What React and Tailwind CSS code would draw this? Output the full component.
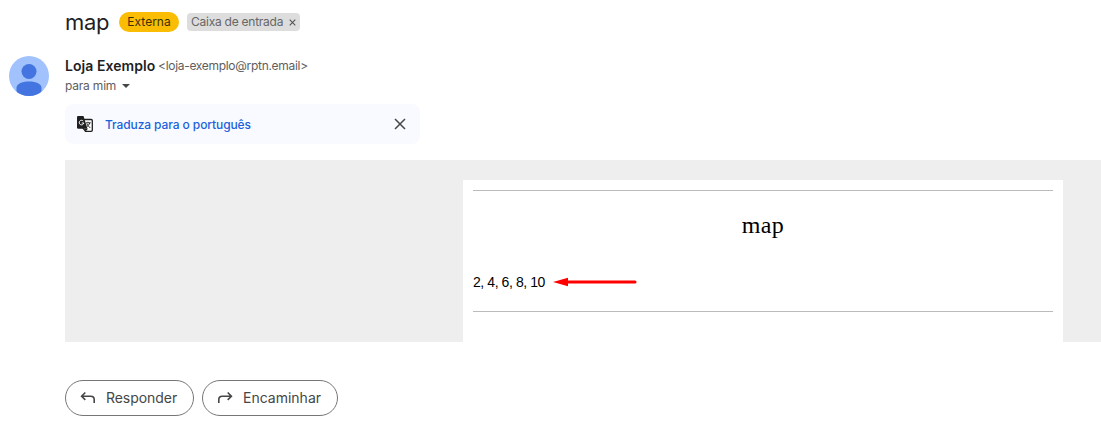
import React from "react";

function Avatar() {
  return (
    <svg className="h-10 w-10 shrink-0" viewBox="0 0 40 40">
      <defs>
        <clipPath id="avatar-circle">
          <circle cx="20" cy="20" r="20" />
        </clipPath>
      </defs>
      <g clipPath="url(#avatar-circle)">
        <rect width="40" height="40" fill="#a1c2fd" />
        <circle cx="20" cy="15.5" r="7.5" fill="#4374e0" />
        <path d="M7.5 40v-8c0-4 5-6.5 12.5-6.5S32.5 28 32.5 32v8z" fill="#4374e0" />
      </g>
    </svg>
  );
}

function ReplyIcon({ className }) {
  return (
    <svg className={className} viewBox="0 0 20 20" fill="none" stroke="#444746" strokeWidth="1.6">
      <path d="M7.3 4.5 3.6 8.2l3.7 3.7M3.6 8.2h9.2q3.4 0 3.4 3.4V15" />
    </svg>
  );
}

function TranslateIcon() {
  return (
    <svg className="h-4 w-4" viewBox="0 0 16 16" fill="none">
      <path d="M6 3.5h8.2q1.1 0 1.1 1.1v9.6q0 1.1-1.1 1.1H8.5L6 12z" fill="#fff" stroke="#1f1f1f" strokeWidth="1.3" />
      <path d="M1 0h5.5l4 12.8H1.2Q0 12.8 0 11.6V1.2Q0 0 1 0z" fill="#1f1f1f" />
      <path d="m7.6 12.8 1 2.7 2.3-2.7z" fill="#1f1f1f" />
      <path d="M6.2 5a2.3 2.3 0 1 0 .6 2H4.7" stroke="#fff" strokeWidth="1" />
      <path d="M8.8 6.8h5M11 5.8v1M12.8 6.8q-.6 2.4-3 4M9.8 7.6q1 2.2 3.5 4.4" stroke="#1f1f1f" strokeWidth=".9" />
    </svg>
  );
}

function Header() {
  return (
    <>
      <div className="flex h-6 items-center pl-[65px]">
        <h1 className="w-[54px] text-[22px] leading-6 tracking-[-0.3px] text-[#1f1f1f]">map</h1>
        <span className="flex h-5 w-[60px] items-center justify-center rounded-full bg-[#fbbc04] text-xs text-[#3c3000]">
          Externa
        </span>
        <span className="ml-2 flex h-[18px] w-[113px] items-center rounded bg-[#ddd] pl-1 text-xs tracking-[-0.25px] whitespace-nowrap text-[#666]">
          <span className="w-[98px] shrink-0">Caixa de entrada</span>
          <svg className="mt-px h-[7px] w-[7px] shrink-0" viewBox="0 0 7 7" stroke="#555" strokeWidth="1.1">
            <path d="m.7.7 5.6 5.6M6.3.7.7 6.3" />
          </svg>
        </span>
      </div>
      <div className="mt-[22px] flex pl-[9px]">
        <Avatar />
        <div className="ml-4 whitespace-nowrap">
          <div className="flex h-5 items-center">
            <strong className="w-[93px] text-sm font-semibold tracking-[0.05px] text-[#1f1f1f]">Loja Exemplo</strong>
            <span className="text-xs tracking-[-0.3px] text-[#5e5e5e]">&lt;loja-exemplo@rptn.email&gt;</span>
          </div>
          <div className="flex h-5 items-center text-xs tracking-[-0.2px] text-[#5e5e5e]">
            <span className="w-[57px]">para mim</span>
            <svg className="h-1 w-2" viewBox="0 0 8 4" fill="#444746">
              <path d="M0 0h8L4 4z" />
            </svg>
          </div>
        </div>
      </div>
    </>
  );
}

function TranslateBar() {
  return (
    <div className="mt-2 ml-[65px] flex h-10 w-[355px] items-center rounded-lg bg-[#f8faff] pr-[14px] pl-3">
      <TranslateIcon />
      <span className="mt-px ml-3 text-xs font-medium tracking-[-0.1px] text-[#1a62dc]">Traduza para o português</span>
      <svg className="ml-auto h-3 w-3" viewBox="0 0 12 12" stroke="#444746" strokeWidth="1.5">
        <path d="m1 1 10 10M11 1 1 11" />
      </svg>
    </div>
  );
}

function Message() {
  return (
    <div className="mt-4 ml-[65px] h-[182px] w-[1036px] bg-[#eee] pt-5 pl-[398px]">
      <div className="h-[162px] w-[600px] bg-white px-[10px] pt-[10px] text-black">
        <div className="h-[122px] border-y border-[#bbb]">
          <h2 className="pt-[20px] text-center font-['Liberation_Serif',serif] text-[24px] leading-7 tracking-[0.4px]">
            map
          </h2>
          <div className="mt-[33px] flex h-5 items-center font-['Liberation_Sans',sans-serif] text-[14px] tracking-[-0.42px]">
            <span className="w-20">2, 4, 6, 8, 10</span>
            <svg className="h-[10px] w-[84px]" viewBox="0 0 84 10" fill="#f00">
              <path d="M0 5 15 .7v8.6z" />
              <path d="M14 5h68" stroke="#f00" strokeWidth="3" strokeLinecap="round" />
            </svg>
          </div>
        </div>
      </div>
    </div>
  );
}

export default function App() {
  return (
    <main className="h-[433px] w-[1101px] overflow-hidden bg-white pt-[10px] font-['Inter',sans-serif]">
      <Header />
      <TranslateBar />
      <Message />
      <div className="mt-[38px] flex gap-2 pl-[65px] text-sm text-[#444746]">
        <button className="flex h-9 w-[129px] items-center rounded-full border border-[#747775] pl-3">
          <ReplyIcon className="h-5 w-5" />
          <span className="ml-2 tracking-[-0.05px]">Responder</span>
        </button>
        <button className="flex h-9 w-[136px] items-center rounded-full border border-[#747775] pl-3">
          <ReplyIcon className="h-5 w-5 -scale-x-100" />
          <span className="ml-2">Encaminhar</span>
        </button>
      </div>
    </main>
  );
}
